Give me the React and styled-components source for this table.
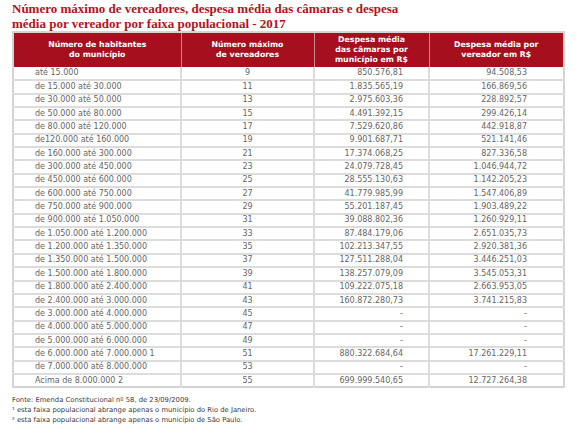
import React from "react";
import styled, { createGlobalStyle } from "styled-components";

const Global = createGlobalStyle`
  html, body { margin: 0; padding: 0; background: #ffffff; }
  body { width: 588px; height: 428px; overflow: hidden; }
`;

const Page = styled.div`
  padding: 1px 25px 0 12px;
  font-family: "DejaVu Sans", sans-serif;
`;

const Title = styled.h1`
  margin: 0;
  font-family: "Liberation Serif", "DejaVu Serif", serif;
  font-weight: 700;
  font-size: 13px;
  line-height: 15px;
  color: #b3121c;
`;

const Table = styled.table`
  margin-top: 0;
  width: 551px;
  border-collapse: collapse;
  table-layout: fixed;
  border: 2px solid #d4d4d4;
`;

const HeadCell = styled.th`
  background: #a6101e;
  color: #ffffff;
  font-weight: 700;
  font-size: 7.8px;
  line-height: 10px;
  height: 34px;
  padding: 0 4px;
  text-align: center;
  vertical-align: middle;
  border-left: 1px solid #c98a90;
  &:first-child { border-left: none; }
`;

const Row = styled.tr`
  height: 13.35px;
  border-top: 2px solid #dcdcdc;
  &:first-child { border-top: none; }
`;

const Cell = styled.td`
  font-size: 8px;
  line-height: 10px;
  color: #666666;
  padding: 0 ${(p) => p.$pr || 0}px 0 ${(p) => p.$pl || 0}px;
  text-align: ${(p) => p.$align || "left"};
  border-left: 2px solid #dcdcdc;
  white-space: nowrap;
  &:first-child { border-left: none; }
`;

const Notes = styled.div`
  margin-top: 7px;
  font-size: 6.8px;
  line-height: 10px;
  color: #3a3a3a;
`;

const rows = [
  ["até 15.000", "9", "850.576,81", "94.508,53"],
  ["de 15.000 até 30.000", "11", "1.835.565,19", "166.869,56"],
  ["de 30.000 até 50.000", "13", "2.975.603,36", "228.892,57"],
  ["de 50.000 até 80.000", "15", "4.491.392,15", "299.426,14"],
  ["de 80.000 até 120.000", "17", "7.529.620,86", "442.918,87"],
  ["de120.000 até 160.000", "19", "9.901.687,71", "521.141,46"],
  ["de 160.000 até 300.000", "21", "17.374.068,25", "827.336,58"],
  ["de 300.000 até 450.000", "23", "24.079.728,45", "1.046.944,72"],
  ["de 450.000 até 600.000", "25", "28.555.130,63", "1.142.205,23"],
  ["de 600.000 até 750.000", "27", "41.779.985,99", "1.547.406,89"],
  ["de 750.000 até 900.000", "29", "55.201.187,45", "1.903.489,22"],
  ["de 900.000 até 1.050.000", "31", "39.088.802,36", "1.260.929,11"],
  ["de 1.050.000 até 1.200.000", "33", "87.484.179,06", "2.651.035,73"],
  ["de 1.200.000 até 1.350.000", "35", "102.213.347,55", "2.920.381,36"],
  ["de 1.350.000 até 1.500.000", "37", "127.511.288,04", "3.446.251,03"],
  ["de 1.500.000 até 1.800.000", "39", "138.257.079,09", "3.545.053,31"],
  ["de 1.800.000 até 2.400.000", "41", "109.222.075,18", "2.663.953,05"],
  ["de 2.400.000 até 3.000.000", "43", "160.872.280,73", "3.741.215,83"],
  ["de 3.000.000 até 4.000.000", "45", "-", "-"],
  ["de 4.000.000 até 5.000.000", "47", "-", "-"],
  ["de 5.000.000 até 6.000.000", "49", "-", "-"],
  ["de 6.000.000 até 7.000.000 1", "51", "880.322.684,64", "17.261.229,11"],
  ["de 7.000.000 até 8.000.000", "53", "-", "-"],
  ["Acima de 8.000.000 2", "55", "699.999.540,65", "12.727.264,38"],
];

export default function App() {
  return (
    <Page>
      <Global />
      <Title>
        Número máximo de vereadores, despesa média das câmaras e despesa
        <br />
        média por vereador por faixa populacional - 2017
      </Title>
      <Table>
        <colgroup>
          <col style={{ width: 168 }} />
          <col style={{ width: 133 }} />
          <col style={{ width: 115 }} />
          <col style={{ width: 135 }} />
        </colgroup>
        <thead>
          <tr>
            <HeadCell>Número de habitantes<br />do município</HeadCell>
            <HeadCell>Número máximo<br />de vereadores</HeadCell>
            <HeadCell>Despesa média<br />das câmaras por<br />município em R$</HeadCell>
            <HeadCell>Despesa média por<br />vereador em R$</HeadCell>
          </tr>
        </thead>
        <tbody>
          {rows.map((r, i) => (
            <Row key={i}>
              <Cell $pl={21}>{r[0]}</Cell>
              <Cell $align="center">{r[1]}</Cell>
              <Cell $align="right" $pr={25}>{r[2]}</Cell>
              <Cell $align="right" $pr={36}>{r[3]}</Cell>
            </Row>
          ))}
        </tbody>
      </Table>
      <Notes>
        <div>Fonte: Emenda Constitucional nº 58, de 23/09/2009.</div>
        <div>¹ esta faixa populacional abrange apenas o município do Rio de Janeiro.</div>
        <div>² esta faixa populacional abrange apenas o município de São Paulo.</div>
      </Notes>
    </Page>
  );
}
